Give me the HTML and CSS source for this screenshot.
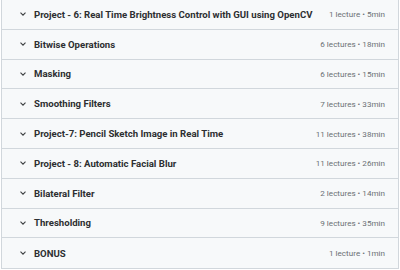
FILE: index.html
```html
<!DOCTYPE html>
<html lang="en">
<head>
    <meta charset="UTF-8">
    <title>Course content</title>
    <link rel="stylesheet" href="styles.css">
</head>
<body>
    <div class="sections">
        <div class="section">
            <span class="chevron"><svg width="6" height="4" viewBox="0 0 6 4"><path d="M0.5 0.7l2.5 2.5 2.5-2.5" fill="none" stroke="#3e4143" stroke-width="1.1"/></svg></span>
            <span class="title">Project - 6: Real Time Brightness Control with GUI using OpenCV</span>
            <span class="meta">1 lecture • 5min</span>
        </div>
        <div class="section">
            <span class="chevron"><svg width="6" height="4" viewBox="0 0 6 4"><path d="M0.5 0.7l2.5 2.5 2.5-2.5" fill="none" stroke="#3e4143" stroke-width="1.1"/></svg></span>
            <span class="title">Bitwise Operations</span>
            <span class="meta">6 lectures • 18min</span>
        </div>
        <div class="section">
            <span class="chevron"><svg width="6" height="4" viewBox="0 0 6 4"><path d="M0.5 0.7l2.5 2.5 2.5-2.5" fill="none" stroke="#3e4143" stroke-width="1.1"/></svg></span>
            <span class="title">Masking</span>
            <span class="meta">6 lectures • 15min</span>
        </div>
        <div class="section">
            <span class="chevron"><svg width="6" height="4" viewBox="0 0 6 4"><path d="M0.5 0.7l2.5 2.5 2.5-2.5" fill="none" stroke="#3e4143" stroke-width="1.1"/></svg></span>
            <span class="title">Smoothing Filters</span>
            <span class="meta">7 lectures • 33min</span>
        </div>
        <div class="section">
            <span class="chevron"><svg width="6" height="4" viewBox="0 0 6 4"><path d="M0.5 0.7l2.5 2.5 2.5-2.5" fill="none" stroke="#3e4143" stroke-width="1.1"/></svg></span>
            <span class="title">Project-7: Pencil Sketch Image in Real Time</span>
            <span class="meta">11 lectures • 38min</span>
        </div>
        <div class="section">
            <span class="chevron"><svg width="6" height="4" viewBox="0 0 6 4"><path d="M0.5 0.7l2.5 2.5 2.5-2.5" fill="none" stroke="#3e4143" stroke-width="1.1"/></svg></span>
            <span class="title">Project - 8: Automatic Facial Blur</span>
            <span class="meta">11 lectures • 26min</span>
        </div>
        <div class="section">
            <span class="chevron"><svg width="6" height="4" viewBox="0 0 6 4"><path d="M0.5 0.7l2.5 2.5 2.5-2.5" fill="none" stroke="#3e4143" stroke-width="1.1"/></svg></span>
            <span class="title">Bilateral Filter</span>
            <span class="meta">2 lectures • 14min</span>
        </div>
        <div class="section">
            <span class="chevron"><svg width="6" height="4" viewBox="0 0 6 4"><path d="M0.5 0.7l2.5 2.5 2.5-2.5" fill="none" stroke="#3e4143" stroke-width="1.1"/></svg></span>
            <span class="title">Thresholding</span>
            <span class="meta">9 lectures • 35min</span>
        </div>
        <div class="section">
            <span class="chevron"><svg width="6" height="4" viewBox="0 0 6 4"><path d="M0.5 0.7l2.5 2.5 2.5-2.5" fill="none" stroke="#3e4143" stroke-width="1.1"/></svg></span>
            <span class="title">BONUS</span>
            <span class="meta">1 lecture • 1min</span>
        </div>
    </div>
</body>
</html>
```
FILE: styles.css
```css
* {
    box-sizing: border-box;
    margin: 0;
    padding: 0;
}

body {
    background-color: #ffffff;
    font-family: Roboto, "Liberation Sans", sans-serif;
    padding: 0 1px;
}

.sections {
    margin-top: -1px;
    border: 1px solid #d1d7dc;
}

.section {
    display: flex;
    align-items: center;
    height: 29.8px;
    padding: 0 13px 0 18px;
    background-color: #f7f9fa;
    border-bottom: 1px solid #d1d7dc;
}

.section:last-child {
    border-bottom: none;
}

.chevron {
    display: flex;
    width: 14px;
}

.title {
    flex: 1;
    font-size: 9.6px;
    font-weight: 700;
    color: #2d2f31;
}

.meta {
    font-size: 8.1px;
    color: #6a6f73;
}
```
